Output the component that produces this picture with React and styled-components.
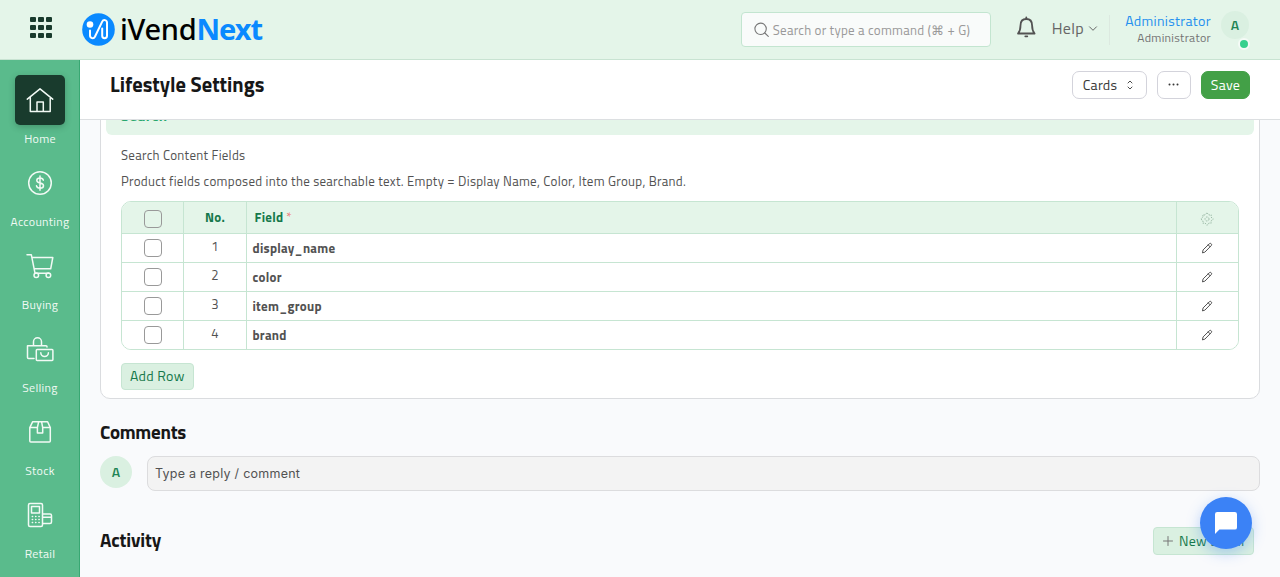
import styled, { createGlobalStyle } from 'styled-components';

const GlobalStyle = createGlobalStyle`
	* {
		box-sizing: border-box;
	}

	body {
		margin: 0px;
		overflow: hidden;
		background-color: #f9fafc;
		color: #525252;
		font-family: 'Titillium Web', Roboto, 'Liberation Sans', sans-serif;
		font-size: 13px;
		letter-spacing: 0.26px;
	}
`;

const Page = styled.div`
	height: 577px;
	display: grid;
	grid-template-rows: 60px 1fr;
	grid-template-columns: 80px 1fr;
	overflow: hidden;
`;

const Navbar = styled.header`
	grid-column: 1 / 3;
	display: flex;
	align-items: flex-start;
	padding: 0px 31px 0px 30px;
	background-color: #e4f5e9;
	border-bottom: 1px solid #c8e3d2;
`;

const Brand = styled.div`
	display: flex;
	align-items: center;
	margin: 12px auto 0px 30px;
	height: 34px;
`;

const BrandName = styled.div`
	margin-left: 5px;
	font-family: 'Noto Sans', sans-serif;
	font-size: 29px;
	font-weight: 500;
	line-height: 34px;
	letter-spacing: -0.3px;
	color: #000;
	white-space: nowrap;

	b {
		color: #0a89ff;
		letter-spacing: -1px;
	}
`;

const SearchBox = styled.div`
	width: 250px;
	height: 35px;
	margin-top: 12px;
	padding-left: 12px;
	display: flex;
	align-items: center;
	gap: 3px;
	border: 1px solid #c3e5d0;
	border-radius: 4px;
	background-color: #f9fbfa;
	color: #999;
	white-space: nowrap;
`;

const BellWrap = styled.div`
	margin: 16px 0px 0px 25px;
	height: 24px;
`;

const Help = styled.div`
	display: flex;
	align-items: center;
	gap: 4px;
	height: 30px;
	margin: 13px 11px 0px 15px;
	font-size: 16px;
	letter-spacing: 0.32px;
	color: #666;
`;

const Divider = styled.div`
	width: 1px;
	height: 30px;
	margin-top: 15px;
	background-color: #dce9e0;
`;

const UserInfo = styled.div`
	width: 101px;
	margin: 12px 10px 0px 0px;
	text-align: right;
	white-space: nowrap;
`;

const UserName = styled.div`
	font-size: 14px;
	line-height: 18px;
	color: #2490ef;
	letter-spacing: 0.34px;
`;

const UserRole = styled.div`
	font-size: 12px;
	line-height: 16px;
	color: #737373;
	letter-spacing: 0.3px;
`;

const Avatar = styled.div`
	position: relative;
	flex: none;
	width: ${({ size }) => size}px;
	height: ${({ size }) => size}px;
	margin-top: ${({ top }) => top || 0}px;
	padding-bottom: 1px;
	display: flex;
	align-items: center;
	justify-content: center;
	border-radius: 50%;
	background-color: #daf0e1;
	color: #1f8555;
	font-size: 14px;
	line-height: 20px;
	font-weight: 600;
`;

const OnlineDot = styled.span`
	position: absolute;
	right: -1px;
	bottom: -11px;
	width: 12px;
	height: 12px;
	border: 2px solid #f5fbf7;
	border-radius: 50%;
	background-color: #38d08e;
`;

const Sidebar = styled.nav`
	padding: 15px 0px 0px 1px;
	background-color: #5abb8c;
	border-right: 1px solid #38a873;
	overflow: hidden;
`;

const SidebarItem = styled.div`
	height: 83px;
	display: flex;
	flex-direction: column;
	align-items: center;
	color: #f2faf5;
	font-size: 12px;
	letter-spacing: 0.3px;
	line-height: 16px;
`;

const SidebarIcon = styled.div`
	width: 50px;
	height: 50px;
	margin-bottom: 6px;
	display: flex;
	align-items: center;
	justify-content: center;
	border-radius: 5px;
	background-color: ${({ $active }) => ($active ? '#193b2d' : 'transparent')};
	box-shadow: ${({ $active }) => ($active ? '0px 2px 6px rgba(25, 59, 45, 0.3)' : 'none')};
`;

const Main = styled.main`
	min-width: 0px;
	display: flex;
	flex-direction: column;
	overflow: hidden;
`;

const PageHead = styled.div`
	flex: none;
	height: 60px;
	padding: 11px 30px 0px;
	display: flex;
	align-items: flex-start;
	gap: 10px;
	background-color: #fff;
	border-bottom: 1px solid #dcdfe1;
`;

const Title = styled.h1`
	margin: 0px auto 0px 0px;
	font-size: 20.5px;
	line-height: 27px;
	font-weight: 700;
	letter-spacing: 0px;
	color: #171717;
`;

const HeadButton = styled.button`
	width: ${({ width }) => width}px;
	height: 28px;
	padding: ${({ $primary }) => ($primary ? '0px 0px 1px' : '0px 2px 1px 0px')};
	display: flex;
	align-items: center;
	justify-content: center;
	gap: 9px;
	border: 1px solid ${({ $primary }) => ($primary ? '#43a047' : '#d3d3db')};
	border-radius: 7px;
	background-color: ${({ $primary }) => ($primary ? '#43a047' : '#fff')};
	color: ${({ $primary }) => ($primary ? '#fff' : '#383838')};
	font-family: inherit;
	font-size: 14px;
	letter-spacing: 0.28px;
`;

const Scroller = styled.div`
	flex: 1;
	min-height: 0px;
	padding: 0px 20px;
	overflow: hidden;
`;

// the form is scrolled, so its first section header sits half under the page head
const FormCard = styled.section`
	height: 309px;
	margin-top: -30px;
	padding: 5px;
	border: 1px solid #dadcdf;
	border-radius: 10px;
	background-color: #fff;
`;

const SectionHead = styled.div`
	height: 39px;
	padding-left: 15px;
	border-radius: 6px;
	background-color: #e4f5e9;
	color: #28a76d;
	font-size: 15px;
	font-weight: 700;
	line-height: 40px;
	letter-spacing: 0.4px;
`;

const SectionBody = styled.div`
	padding: 10px 15px 0px;
`;

const FieldText = styled.div`
	height: 20px;
	margin-bottom: ${({ gap }) => gap}px;
	line-height: 20px;
	letter-spacing: 0.285px;
	white-space: nowrap;
`;

const Grid = styled.div`
	border: 1px solid #c6e5d2;
	border-radius: 10px;
	overflow: hidden;
`;

const GridRow = styled.div`
	height: ${({ $head }) => ($head ? 32 : 29)}px;
	display: grid;
	grid-template-columns: 62px 63px 1fr 61px;
	background-color: ${({ $head }) => ($head ? '#e4f5e9' : '#fff')};
	border-bottom: 1px solid #c6e5d2;

	&:last-child {
		height: 28px;
		border-bottom: 0px;
	}
`;

const Cell = styled.div`
	display: flex;
	align-items: center;
	justify-content: ${({ $left }) => ($left ? 'flex-start' : 'center')};
	padding: ${({ pad }) => pad || '0px'};
	border-right: 1px solid #c6e5d2;
	font-weight: ${({ $bold }) => ($bold ? 700 : 400)};
	line-height: 20px;
	color: ${({ $head }) => ($head ? '#16794c' : '#525252')};

	&:last-child {
		border-right: 0px;
	}
`;

const Required = styled.span`
	margin-left: 3px;
	font-weight: 400;
	color: #f07a7a;
`;

const Checkbox = styled.span`
	width: 18px;
	height: 18px;
	border: 1px solid #999;
	border-radius: 4px;
`;

const GreenButton = styled.button`
	width: ${({ width }) => width}px;
	height: ${({ height }) => height}px;
	margin-top: ${({ top }) => top || 0}px;
	padding: 0px 0px ${({ bottom }) => bottom || 0}px 8px;
	display: flex;
	align-items: center;
	gap: 5px;
	border: 1px solid #c6e5d2;
	border-radius: 4px;
	background-color: #daf0e1;
	color: #16794c;
	font-family: inherit;
	font-size: 14px;
	line-height: 20px;
	letter-spacing: 0.28px;
	white-space: nowrap;
`;

const Heading = styled.h2`
	margin: 0px;
	font-size: 19px;
	line-height: 26px;
	font-weight: 700;
	letter-spacing: -0.28px;
	color: #171717;
`;

const CommentHeading = styled(Heading)`
	margin: 20px 0px 11px;
`;

const ActivityHeading = styled(Heading)`
	margin-bottom: 2px;
	letter-spacing: -0.15px;
`;

const CommentRow = styled.div`
	display: flex;
	gap: 15px;
`;

const CommentInput = styled.div`
	flex: 1;
	height: 35px;
	padding-left: 7px;
	border: 1px solid #dcdcde;
	border-radius: 8px;
	background-color: #f3f3f3;
	font-family: Inter, sans-serif;
	font-size: 12.5px;
	line-height: 33px;
	letter-spacing: 0.25px;
`;

const ActivityRow = styled.div`
	display: flex;
	align-items: center;
	justify-content: space-between;
	height: 28px;
	margin-top: 36px;
	padding-right: 6px;
`;

const ChatButton = styled.button`
	position: fixed;
	right: 28px;
	bottom: 28px;
	width: 52px;
	height: 52px;
	padding: 0px;
	display: flex;
	align-items: center;
	justify-content: center;
	border: 0px;
	border-radius: 50%;
	background-color: #3b82f6;
	box-shadow: 0px 4px 14px rgba(59, 130, 246, 0.35);
`;

const Icon = styled.svg`
	flex: none;
	display: block;
	fill: none;
	stroke: ${({ $color }) => $color || 'currentColor'};
	stroke-linecap: ${({ $cap }) => $cap || 'round'};
	stroke-linejoin: round;
	stroke-width: ${({ $weight }) => $weight || 1};
`;

const AppsIconBox = styled.div`
	width: 22px;
	margin-top: 17px;
	display: grid;
	grid-template-columns: repeat(3, 6px);
	grid-auto-rows: 5px;
	gap: 3px 2px;

	span {
		border-radius: 1px;
		background-color: #193b2d;
	}
`;

function AppsIcon() {
	return (
		<AppsIconBox>
			{[...Array(9).keys()].map((n) => (
				<span key={n} />
			))}
		</AppsIconBox>
	);
}

function LogoIcon() {
	return (
		<Icon width="33" height="33" viewBox="0 0 33 33" $weight={2} $color="#fff">
			<circle cx="16.5" cy="16.5" r="16.3" fill="#0a89ff" stroke="none" />
			<circle cx="8" cy="11.5" r="3.3" fill="#fff" stroke="none" />
			<path d="M8 17.5V22.6a2.6 2.6 0 0 0 4.9 1.2L20.2 8.6c1.2-2.5 4.8-1.8 4.8 1V22.8a2.4 2.4 0 0 1-4.8 0V15.5" />
		</Icon>
	);
}

function PencilIcon() {
	return (
		<Icon width="12" height="12" viewBox="0 0 12 12" $weight={1}>
			<path d="M1.5 10.5 2.1 7.9 8.3 1.8a1.3 1.3 0 0 1 1.9 0 1.3 1.3 0 0 1 0 1.9L4.1 9.9ZM7.2 2.9l1.9 1.9" />
		</Icon>
	);
}

function GearIcon() {
	return (
		<Icon width="14" height="14" viewBox="0 0 14 14" $color="#9dbba8" $cap="butt" strokeDasharray="1.5 1">
			<path d="M7 .8 8.9 3 11.2 2.8 11 5.1 13.3 7 11 8.9 11.2 11.2 8.9 11 7 13.3 5.1 11 2.8 11.2 3 8.9.8 7 3 5.1 2.8 2.8 5.1 3Z" />
			<circle cx="7" cy="7" r="2" />
		</Icon>
	);
}

const sidebarItems = [
	{
		label: 'Home',
		icon: <path d="M1.3 13.2 14 2.8 26.7 13.2M4.3 11.2V25.5H24.2V11.2M11 25.3V16H17.3V25.3" />,
	},
	{
		label: 'Accounting',
		icon: (
			<>
				<circle cx="14" cy="14" r="11.3" />
				<path d="M17.3 11.2c-.3-1.5-1.5-2.2-3.3-2.2s-3.2.9-3.2 2.4c0 3.5 6.7 1.8 6.7 5.3 0 1.5-1.4 2.5-3.4 2.5s-3.3-.9-3.6-2.4M14 7v14.2" />
			</>
		),
	},
	{
		label: 'Buying',
		icon: (
			<>
				<path d="M1 2.7H5.3L9 21.2H22.7M6.3 5.5H26.8L24.7 16.8H8.3" />
				<circle cx="10.3" cy="23.2" r="2.3" />
				<circle cx="22.4" cy="23.2" r="2.3" />
			</>
		),
	},
	{
		label: 'Selling',
		icon: (
			<>
				<path d="M8 23.5H2.5a1 1 0 0 1-1-1V10.7H20a1 1 0 0 1 1 1V12M7.5 10.5V6.8a4 4 0 0 1 8 0V10.5" />
				<rect x="10.3" y="14.6" width="16.6" height="10.8" rx="0.8" />
				<path d="M14.8 17.8a3.8 3.8 0 0 0 7.6 0" />
			</>
		),
	},
	{
		label: 'Stock',
		icon: (
			<path d="M3.8 9.6 6.7 3.7H21.6L24.3 9.6V23a1 1 0 0 1-1 1H4.8a1 1 0 0 1-1-1ZM4 9.6H11.3M16.7 9.6H24M12.6 3.8 11.4 9.6V15H16.7V9.6L15.6 3.8" />
		),
	},
	{
		label: 'Retail',
		icon: (
			<>
				<rect x="2.5" y="2.5" width="14" height="23" rx="1.5" />
				<rect x="5.5" y="5.5" width="8" height="6.5" />
				<path d="M16.7 13H24a1.5 1.5 0 0 1 1.5 1.5V21a1.5 1.5 0 0 1-1.5 1.5H16.7M17 16.2H25" />
				<path strokeDasharray="0.3 3" d="M6.3 15.5h7M6.3 18.5h7M6.3 21.5h7" />
			</>
		),
	},
];

const fields = ['display_name', 'color', 'item_group', 'brand'];

function TopBar() {
	return (
		<Navbar>
			<AppsIcon />
			<Brand>
				<LogoIcon />
				<BrandName>
					iVend<b>Next</b>
				</BrandName>
			</Brand>
			<SearchBox>
				<Icon width="16" height="16" viewBox="0 0 16 16" $color="#777" $weight={1.1}>
					<circle cx="6.6" cy="6.8" r="5.7" />
					<path d="M10.8 11 14.3 14.3" />
				</Icon>
				Search or type a command (⌘ + G)
			</SearchBox>
			<BellWrap>
				<Icon width="21" height="23" viewBox="0 0 21 23" $color="#525252" $weight={1.8}>
					<path d="M2 17.5c2-2.2 2.5-4 2.5-8 0-4 2.2-6.5 5.8-6.5s5.8 2.5 5.8 6.5c0 4 .5 5.8 2.5 8Z" />
					<path d="M10.3 1.5v1.2M9.3 20.3h2" />
				</Icon>
			</BellWrap>
			<Help>
				Help
				<Icon width="10" height="8" viewBox="0 0 10 8">
					<path d="M1.5 2.8 5 6.3 8.5 2.8" />
				</Icon>
			</Help>
			<Divider />
			<UserInfo>
				<UserName>Administrator</UserName>
				<UserRole>Administrator</UserRole>
			</UserInfo>
			<Avatar size={28} top={11}>
				A
				<OnlineDot />
			</Avatar>
		</Navbar>
	);
}

function ChildTable() {
	return (
		<Grid>
			<GridRow $head>
				<Cell pad="2px 0px 0px">
					<Checkbox />
				</Cell>
				<Cell $bold $head pad="0px 0px 2px">
					No.
				</Cell>
				<Cell $bold $head $left pad="0px 0px 2px 7.5px">
					Field <Required>*</Required>
				</Cell>
				<Cell pad="2px 2px 0px 0px">
					<GearIcon />
				</Cell>
			</GridRow>
			{fields.map((name, index) => (
				<GridRow key={name}>
					<Cell>
						<Checkbox />
					</Cell>
					<Cell pad="0px 0px 4px">{index + 1}</Cell>
					<Cell $bold $left pad="0px 0px 0px 5.5px">
						{name}
					</Cell>
					<Cell pad="0px 2px 0px 0px">
						<PencilIcon />
					</Cell>
				</GridRow>
			))}
		</Grid>
	);
}

function App() {
	return (
		<>
			<GlobalStyle />
			<Page>
				<TopBar />
				<Sidebar>
					{sidebarItems.map((item, index) => (
						<SidebarItem key={item.label}>
							<SidebarIcon $active={index === 0}>
								<Icon width="28" height="28" viewBox="0 0 28 28" $weight={1.5}>
									{item.icon}
								</Icon>
							</SidebarIcon>
							{item.label}
						</SidebarItem>
					))}
				</Sidebar>
				<Main>
					<PageHead>
						<Title>Lifestyle Settings</Title>
						<HeadButton width={75}>
							Cards
							<Icon width="8" height="10" viewBox="0 0 8 10" $weight={0.9}>
								<path d="M2 3 4 1 6 3M2 7 4 9 6 7" />
							</Icon>
						</HeadButton>
						<HeadButton width={34}>
							<Icon width="12" height="6" viewBox="0 0 12 6" $weight={2}>
								<path d="M2.5 2.5h.01M6.5 2.5h.01M10.5 2.5h.01" />
							</Icon>
						</HeadButton>
						<HeadButton width={49} $primary>
							Save
						</HeadButton>
					</PageHead>
					<Scroller>
						<FormCard>
							<SectionHead>Search</SectionHead>
							<SectionBody>
								<FieldText gap={6}>Search Content Fields</FieldText>
								<FieldText gap={10}>
									Product fields composed into the searchable text. Empty = Display Name, Color, Item Group, Brand.
								</FieldText>
								<ChildTable />
								<GreenButton width={73} height={27} top={13} bottom={1}>
									Add Row
								</GreenButton>
							</SectionBody>
						</FormCard>
						<CommentHeading>Comments</CommentHeading>
						<CommentRow>
							<Avatar size={32}>A</Avatar>
							<CommentInput>Type a reply / comment</CommentInput>
						</CommentRow>
						<ActivityRow>
							<ActivityHeading>Activity</ActivityHeading>
							<GreenButton width={101} height={28}>
								<Icon width="12" height="12" viewBox="0 0 12 12" $color="#777">
									<path d="M6 1.5v9M1.5 6h9" />
								</Icon>
								New Email
							</GreenButton>
						</ActivityRow>
					</Scroller>
				</Main>
			</Page>
			<ChatButton>
				<svg width="22" height="22" viewBox="0 0 22 22">
					<path fill="#fff" d="M2.2 0H19.8A2.2 2.2 0 0 1 22 2.2V15.4A2.2 2.2 0 0 1 19.8 17.6H4.4L0 22V2.2A2.2 2.2 0 0 1 2.2 0Z" />
				</svg>
			</ChatButton>
		</>
	);
}

export default App;
